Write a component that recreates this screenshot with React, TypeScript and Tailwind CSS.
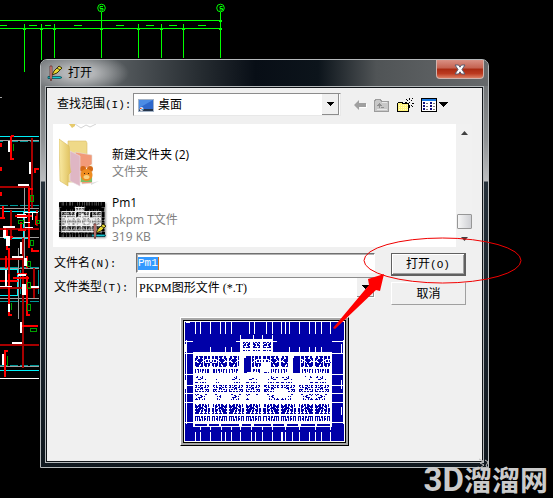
import { useState } from 'react';
import type { ReactNode } from 'react';

type Rect = [number, number, number, number];

// Canvas drawing behind the dialog: [x, y, width, height] grouped by layer color
const cadLayers: { color: string; rects: Rect[] }[] = [
  {
    color: '#00ff00',
    rects: [
      [0, 20, 221, 1], [0, 28, 221, 1],
      [24, 24, 1, 48], [41, 24, 1, 36], [54, 24, 1, 34], [101, 12, 1, 46],
      [138, 24, 1, 34], [161, 24, 1, 34], [183, 24, 1, 34], [220, 12, 1, 46],
      [0, 25, 7, 1], [29, 25, 8, 1], [45, 25, 6, 1], [74, 25, 8, 1], [116, 25, 8, 1],
      [146, 25, 8, 1], [169, 25, 8, 1], [198, 25, 8, 1],
      [23, 28, 3, 2], [40, 28, 3, 2], [53, 28, 3, 2], [100, 28, 3, 2], [137, 28, 3, 2],
      [160, 28, 3, 2], [182, 28, 3, 2], [219, 28, 3, 2], [219, 20, 3, 2],
    ],
  },
  {
    color: '#00f0f8',
    rects: [
      [0, 136, 39, 1], [0, 370, 39, 1], [4, 211, 35, 1], [4, 238, 24, 1],
      [0, 269, 19, 1], [17, 269, 1, 26], [0, 295, 18, 1], [23, 211, 1, 27],
    ],
  },
  {
    color: '#009898',
    rects: [
      [0, 141, 3, 1], [10, 141, 8, 1], [20, 141, 8, 1], [30, 141, 9, 1],
      [0, 205, 8, 1], [10, 205, 8, 1], [20, 205, 8, 1], [30, 205, 9, 1],
      [0, 267, 8, 1], [10, 267, 8, 1], [20, 267, 8, 1], [30, 267, 9, 1],
      [0, 301, 8, 1], [10, 301, 8, 1], [20, 301, 8, 1], [30, 301, 9, 1],
      [0, 365, 8, 1], [10, 365, 8, 1], [20, 365, 8, 1], [30, 365, 9, 1],
      [20, 270, 1, 24], [38, 270, 1, 24], [24, 240, 1, 26],
    ],
  },
  {
    color: '#a0a0a0',
    rects: [
      [0, 97, 2, 1], [0, 140, 39, 1], [0, 208, 39, 1], [0, 237, 39, 1], [0, 268, 39, 1],
      [0, 298, 39, 1], [0, 366, 39, 1], [24, 188, 1, 71], [18, 248, 1, 71],
    ],
  },
  {
    color: '#a80000',
    rects: [
      [31, 138, 2, 70], [0, 186, 30, 2], [0, 228, 39, 2], [0, 258, 28, 2], [10, 210, 2, 30],
      [36, 210, 2, 16], [22, 238, 2, 130], [0, 344, 39, 2], [0, 287, 39, 2], [8, 268, 2, 30],
      [33, 268, 2, 30],
    ],
  },
  {
    color: '#ff0000',
    rects: [
      [10, 136, 2, 24], [10, 158, 4, 2], [11, 135, 3, 2], [0, 143, 2, 4], [0, 167, 2, 4],
      [34, 170, 2, 3], [34, 168, 5, 2], [0, 192, 2, 4], [28, 188, 2, 38], [28, 188, 5, 2],
      [2, 206, 2, 13], [0, 217, 5, 2], [15, 215, 18, 2], [4, 228, 2, 10], [20, 222, 2, 8],
      [28, 224, 2, 24], [31, 250, 8, 2], [31, 248, 2, 4], [8, 248, 2, 22], [5, 256, 2, 12],
      [26, 256, 2, 12], [13, 277, 16, 2], [17, 273, 10, 2], [0, 280, 18, 2], [8, 274, 2, 42],
      [8, 314, 4, 2], [26, 276, 2, 40], [26, 314, 4, 2], [22, 325, 16, 2], [4, 350, 2, 27],
      [4, 350, 4, 2], [18, 229, 8, 2], [35, 216, 2, 9], [6, 230, 2, 20], [10, 236, 3, 2],
    ],
  },
  {
    color: '#ffffff',
    rects: [
      [8, 141, 2, 11], [29, 162, 2, 12], [18, 184, 11, 2], [17, 217, 10, 1], [17, 214, 9, 1],
      [32, 212, 1, 8], [24, 212, 14, 1], [3, 226, 12, 2], [3, 230, 3, 8], [6, 236, 4, 10],
      [20, 242, 2, 12], [12, 256, 11, 2], [24, 258, 3, 8], [5, 270, 2, 16], [0, 286, 12, 1],
      [22, 284, 4, 11], [30, 286, 9, 2], [8, 304, 2, 8], [20, 322, 2, 11], [12, 342, 10, 2],
      [2, 354, 2, 11], [18, 274, 8, 2], [25, 227, 8, 1], [0, 378, 39, 1], [24, 222, 6, 1],
    ],
  },
];

// Open boxes of the canvas drawing
const cadBoxes: Rect[] = [
  [30, 195, 3, 6], [18, 220, 5, 3], [36, 220, 3, 3], [30, 240, 3, 5],
  [27, 261, 3, 5], [27, 282, 3, 6], [27, 304, 3, 6], [30, 328, 6, 3],
];

function CadCanvas() {
  return (
    <svg className="absolute left-0 top-0" width="553" height="498" aria-hidden="true">
      <g shapeRendering="crispEdges">
        {cadLayers.map((layer) => (
          <g key={layer.color} fill={layer.color}>
            {layer.rects.map(([x, y, w, h], i) => (
              <rect key={i} x={x} y={y} width={w} height={h} />
            ))}
          </g>
        ))}
        <g fill="none" stroke="#00a000">
          {cadBoxes.map(([x, y, w, h], i) => (
            <rect key={i} x={x + 0.5} y={y + 0.5} width={w} height={h} />
          ))}
          <path d="M13.5 144v7M11.500 303v7M7.500 356v10" />
        </g>
      </g>
      <g fill="none" stroke="#00ff00">
        <circle cx="101.500" cy="8" r="3.800" />
        <circle cx="220.500" cy="8" r="3.800" />
        <path d="M103 6.500h-3v2h3v1.500h-3M222.500 6.500h-2.500v2h2.500v1.500h-3" />
      </g>
    </svg>
  );
}

// One room per tile, "#" is open floor and the rest is line work
const roomBands: { y: number; rows: string[] }[] = [
  {
    y: 34,
    rows: [
      '..##.####.###.##.',
      '..##..###.###.##.',
      '.###..##..###.##.',
      '.##.#####.#......',
      '.#.######...##.#.',
      '....####..#.##.#.',
      '.##..##.#.#.....#',
      '.########.######.',
      '.#####.##.###.##.',
      '.####..##.###.##.',
      '..###.###..##.#..',
    ],
  },
  { y: 47, rows: ['.#.##.#.##.#.##..', '.#..#.#.##.#.##..', '.#..#.#.#..#.##..', '.#..#...#..#.##..'] },
  { y: 54, rows: ['...#....#........', '..##..#.#........', '.......##........', '....###....#.....', '.................', '.###..#.##.#.....'] },
  { y: 62, rows: ['.##.#.###..#.##..', '..#...#....#..#..', '.##.##.##.##.#...', '......###........', '.#.##.#.#..####..', '.#..........#.#..', '.###.##.##.#.##..'] },
  { y: 71, rows: ['.#.##......##....', '..#...##.........', '.......##.#......', '....####.........', '..#..#....#......', '.###.#..#.#......'] },
  {
    y: 81,
    rows: [
      '.#...##.##.#..#..',
      '.##.###.##.##.#..',
      '.######.#.###.#..',
      '.###.####..##....',
      '..#.######..#.##.',
      '.######.#.###.##.',
      '.#####.##.###.##.',
      '..####.##..##.##.',
      '.####..#...#..#..',
      '.####.###.###.##.',
      '.................',
      '.................',
      '.#####.##.##.###.',
      '.#.#.#.##.#..#.#.',
      '.#.#.#..#.##.#.#.',
      '.#.#.##.#.##.#.#.',
      '.#.#.##.#.#..#.#.',
    ],
  },
];

// Rooms 1, 4 and 6 are mirrored
const mirrored = [false, true, false, false, true, false, true, false];

const topTicks = [10, 15, 25, 35, 40, 46, 64, 69, 80, 86, 95, 99, 103, 113, 123, 129, 135, 144];
const bottomTicks = [10, 15, 25, 36, 40, 46, 55, 66, 70, 77, 86, 95, 96, 99, 106, 113, 123, 129, 135, 144];
const innerTicks = [25, 40, 46, 103, 113, 123, 129, 135];
const sideTicks = [19, 31, 52, 62, 70, 79, 99];

function tilePath(rows: string[], x: number, y: number, mirror = false) {
  let d = '';
  rows.forEach((row, r) => {
    for (let c = 0; c < row.length; c++) {
      const cell = mirror ? row[row.length - 1 - c] : row[c];
      if (cell === '#') d += `M${x + c} ${y + r}h1v1h-1z`;
    }
  });
  return d;
}

function FloorPlan({ ground, line, crisp, className }: { ground: string; line: string; crisp: boolean; className: string }) {
  const rooms = roomBands
    .map((band) => mirrored.map((mirror, i) => tilePath(band.rows, 9 + i * 17, band.y, mirror)).join(''))
    .join('');
  const lobby = [57, 67, 77]
    .map((x, i) => tilePath(['.##.##.#.', '.#.#..##.', '..##.###.', '.###.##..', '.#....##.', '.##.####.', '.........', '.........', '.##.#.##.'], x, 20, i === 1))
    .join('');

  return (
    <svg
      className={className}
      viewBox="0 0 158 118"
      preserveAspectRatio="none"
      shapeRendering={crisp ? 'crispEdges' : 'auto'}
      role="img"
      aria-label="Pm1"
    >
      <rect width="158" height="118" fill={ground} />
      <g fill={line}>
        {topTicks.map((x) => <rect key={x} x={x} width="1" height="12" />)}
        {bottomTicks.map((x) => <rect key={x} x={x} y="109" width="1" height="9" />)}
        {innerTicks.map((x) => <rect key={x} x={x} y="25" width="1" height="6" />)}
        {[55, 68, 77, 86].map((x) => <rect key={x} x={x} y="13" width="1" height="6" />)}
        {sideTicks.map((y) => (
          <g key={y}>
            <rect y={y} width="8" height="1" />
            <rect x="146" y={y} width="12" height="1" />
          </g>
        ))}
        <path d="M1 0h4v1h-4zM1 18h1v83h-1zM0 22h1v8h-1zM0 58h1v8h-1zM157 18h1v83h-1zM155 22h1v10h-1zM155 58h1v8h-1zM155 84h1v8h-1z" />
        <path d="M51 19h40v1h-40zM55 17h32v14h-32zM8 30h138v74h-138z" />
        {[15, 25, 36, 46, 55, 66, 77, 86, 99, 113, 129, 144].map((x) => <rect key={x} x={x} y="104" width="1" height="3" />)}
      </g>
      <path d={rooms + lobby} fill={ground} />
      {/* stairwells and the white core around them */}
      <rect x="54" y="32" width="13" height="20" fill={line} />
      <rect x="102" y="32" width="13" height="20" fill={line} />
      <path d="M59 34h7v17h-7zM107 34h7v17h-7z" fill={ground} />
      <path d="M57 34h4v2h-3v6h-1zM104 34h4v2h-3v6h-1zM76 40h9v10h-9zM34 52h13v8h-13zM62 50h12v6h-12zM64 72h13v7h-13zM88 66h14v9h-14zM90 52h10v3h-10zM36 70h10v10h-10zM115 55h8v7h-8z" fill={line} />
      <path
        d="M10 101h12v2h-12zM24 101h10v2h-10zM36 101h18v2h-18zM57 101h9v2h-9zM69 101h16v2h-16zM87 101h11v2h-11zM101 101h11v2h-11zM115 101h14v2h-14zM131 101h13v2h-13z"
        fill={ground}
      />
    </svg>
  );
}

function AppIcon({ className }: { className: string }) {
  return (
    <svg className={className} viewBox="0 0 16 16" aria-hidden="true">
      <path d="M1 11.500h12l2 1-2 1H1z" fill="#10c8d0" stroke="#064c58" strokeWidth=".8" />
      <path d="M5 10 7 6l5-5 3 2-5 5z" fill="#e8d830" stroke="#3a3208" />
      <path d="m10 3 3 2" stroke="#403c30" />
      <path d="M3 1h2v12l-1 3-1-3z" fill="#e4948c" stroke="#5a2420" strokeWidth=".7" />
    </svg>
  );
}

function DesktopIcon() {
  return (
    <svg className="h-4 w-4 shrink-0" viewBox="0 0 16 16" aria-hidden="true">
      <rect x=".5" y="2.500" width="15" height="12" fill="#2e68cc" stroke="#a4b4c8" />
      <path d="M1 3h14L1 11z" fill="#4c8ce4" />
      <path d="M1 12h14v2H1z" fill="#26364c" />
      <circle cx="3.500" cy="12" r="2" fill="#e8e8f0" />
      <path d="M2 11h1.500v1H2z" fill="#e84820" />
      <path d="M3.500 12H5v1H3.500z" fill="#28a0e8" />
    </svg>
  );
}

function FolderIcon() {
  return (
    <svg className="h-[50px] w-[42px]" viewBox="0 0 42 50" aria-hidden="true">
      <defs>
        <linearGradient id="flap" x1="0" x2="1">
          <stop offset="0" stopColor="#f9eaa4" />
          <stop offset="1" stopColor="#dfc05c" />
        </linearGradient>
      </defs>
      <path d="m32 45 8-2-8 4z" fill="#ddd" />
      <path d="M9 3h18l1 2v39H9z" fill="#efd988" stroke="#d8bd68" strokeWidth=".6" />
      <path d="m16 14 17 3v28l-10 1z" fill="#f29a78" stroke="#e0e0e0" strokeWidth=".6" />
      <path d="m21 34 12-8v10z" fill="#f7f0d8" />
      <path d="M22 36h11v8H22z" fill="#7cc068" />
      <circle cx="24" cy="31" r="3" fill="#d46a18" />
      <circle cx="31" cy="31" r="3" fill="#d46a18" />
      <ellipse cx="27.500" cy="37" rx="6" ry="6" fill="#ee8c20" />
      <ellipse cx="27.500" cy="39" rx="3" ry="2" fill="#f8d080" />
      <path d="M25 35h1v1h-1zM29 35h1v1h-1z" fill="#402008" />
      <path d="m11 13 10 5v30l-10-5z" fill="#dfb6c4" stroke="#e8dce0" strokeWidth=".6" />
      <path d="m0 1 10 7c1 3 0 21 2 26l-3 3v11L1 43z" fill="url(#flap)" stroke="#d9bc60" strokeWidth=".6" />
    </svg>
  );
}

function ToolbarButton({ label, children }: { label: string; children: ReactNode }) {
  return (
    <button type="button" aria-label={label} className="flex h-4 shrink-0 items-center">
      {children}
    </button>
  );
}

// Half-width latin part of a label
function Half({ children }: { children: ReactNode }) {
  return <span className="font-['Liberation_Mono',monospace] text-[11px]">{children}</span>;
}

function DropArrow() {
  return (
    <span className="pointer-events-none flex h-full w-[17px] shrink-0 items-center justify-center border-b border-r border-[#8c8c8c] bg-[#f0f0f0]">
      <svg className="h-1 w-[7px]" viewBox="0 0 7 4" shapeRendering="crispEdges" aria-hidden="true">
        <path d="M0 0h7L3.500 4z" fill="#000" />
      </svg>
    </span>
  );
}

function Toolbar() {
  return (
    <div className="flex items-center pl-[10px]">
      <label htmlFor="look-in" className="w-[76px] shrink-0">
        查找范围<Half>(I):</Half>
      </label>
      <div className="flex h-[23px] flex-1 items-center border border-[#e8e8e8] border-l-[#8c8c8c] border-t-[#8c8c8c] bg-white pl-1 pr-px">
        <DesktopIcon />
        <select id="look-in" className="h-full min-w-0 flex-1 appearance-none bg-transparent pl-1 outline-none">
          <option>桌面</option>
        </select>
        <DropArrow />
      </div>
      <div className="flex w-[141px] shrink-0 items-center gap-[7px] pl-[13px]">
        <ToolbarButton label="后退">
          <svg className="h-3 w-[13px]" viewBox="0 0 13 12" aria-hidden="true">
            <path d="m0 6 5-5v3h7v4H5v3z" fill="#a0a0a0" />
            <path d="M5.500 8.500H12.500V5" fill="none" stroke="#fff" />
          </svg>
        </ToolbarButton>
        <ToolbarButton label="向上一级">
          <svg className="h-[14px] w-4" viewBox="0 0 16 14" shapeRendering="crispEdges" aria-hidden="true">
            <path d="M.5 13.500v-11h1v-1h5l1 2h7v10z" fill="#c8c8c8" stroke="#9c9c9c" />
            <path d="M8 4h5v1H8zM3 11h10v1H3z" fill="#e8e8e8" />
            <path d="M5 5h1v1h1v1h1v1H6v2H5V8H3V7h1V6h1zM7 9h3v1H7z" fill="#909090" />
          </svg>
        </ToolbarButton>
        <ToolbarButton label="新建文件夹">
          <svg className="h-4 w-[17px]" viewBox="0 0 17 16" shapeRendering="crispEdges" aria-hidden="true">
            <path d="M.5 14.500V6.500l1-1h3l2 1H11.500V14.500z" fill="#fff47c" stroke="#000" />
            <path d="M2 8.500h9M2 10.500h9M2 12.500h9" stroke="#fffbd0" strokeDasharray="1 1" />
            <path d="M12 1h1v2h-1zM12 8h1v3h-1zM8 5h2v1H8zM15 6h2v1h-2zM9 2h1v1H9zM10 3h1v1h-1zM15 1h1v1h-1zM14 3h1v1h-1zM14 8h1v1h-1zM15 9h1v1h-1zM12 5h1v1h-1z" fill="#000" />
          </svg>
        </ToolbarButton>
        <ToolbarButton label="查看">
          <svg className="h-4 w-[27px]" viewBox="0 0 27 16" shapeRendering="crispEdges" aria-hidden="true">
            <path d="M.5 1.500h15v13H.5z" fill="#fff" stroke="#000" />
            <path d="M1 2h14v2H1z" fill="#1878e0" />
            <path d="M2 5h2v2H2zM2 8h2v2H2zM2 11h2v2H2zM9 5h2v2H9zM9 8h2v2H9zM9 11h2v2H9z" fill="#10107c" />
            <path d="M5 6.500h2M12 6.500h2M5 9.500h2M12 9.500h2M5 12.500h2M12 12.500h2" stroke="#777" />
            <path d="M18 5h9l-4.500 5z" fill="#000" />
          </svg>
        </ToolbarButton>
      </div>
    </div>
  );
}

function FileItem({ icon, name, details }: { icon: ReactNode; name: string; details: string[] }) {
  return (
    <li className="flex h-[57px] items-center">
      <div className="flex w-[59px] shrink-0 pl-[6px]">{icon}</div>
      <div className="leading-[17px]">
        <p>{name}</p>
        {details.map((detail) => (
          <p key={detail} className="text-[#808080]">{detail}</p>
        ))}
      </div>
    </li>
  );
}

function FileList() {
  return (
    <div className="ml-[6px] mr-[10px] mt-2 flex h-[123px] bg-white">
      <ul className="min-w-0 flex-1 overflow-hidden font-['Open_Sans','Noto_Sans_CJK_SC',sans-serif]">
        <li className="h-[10px] pl-[14px]">
          <svg className="h-[5px] w-8" viewBox="0 0 32 5" aria-hidden="true">
            <path d="m2 0 3 4 3-2V0z" fill="#e6ca6c" />
            <path d="m8 0 6 4 5-3 4 2 6-3" fill="none" stroke="#d4d4d4" />
          </svg>
        </li>
        <FileItem icon={<FolderIcon />} name="新建文件夹 (2)" details={['文件夹']} />
        <FileItem
          icon={
            <span className="relative block h-[35px] w-[46px] shadow-[1px_1px_2px_#999]">
              <FloorPlan ground="#000000" line="#f0f0f0" crisp={false} className="block h-full w-full" />
              <AppIcon className="absolute -bottom-[2px] -right-[2px] h-4 w-4" />
            </span>
          }
          name="Pm1"
          details={['pkpm T文件', '319 KB']}
        />
      </ul>
      <div className="flex w-4 shrink-0 flex-col items-center bg-[#f1f1f1]">
        <svg className="mt-[7px] h-1 w-[7px]" viewBox="0 0 7 4" aria-hidden="true">
          <path d="M0 4h7L3.500 0z" fill="#404040" />
        </svg>
        <div className="mt-auto h-[15px] w-[15px] rounded-[1px] border border-[#979797] bg-gradient-to-r from-[#f6f6f6] to-[#cfd0d4]" />
        <svg className="mb-[6px] mt-2 h-1 w-[7px]" viewBox="0 0 7 4" aria-hidden="true">
          <path d="M0 0h7L3.500 4z" fill="#404040" />
        </svg>
      </div>
    </div>
  );
}

function FileForm() {
  const [fileName, setFileName] = useState('Pm1');

  return (
    <form className="mt-[6px] flex pl-[7px] pr-4" onSubmit={(e) => e.preventDefault()}>
      <div className="flex min-w-0 flex-1 flex-col gap-1">
        <div className="flex h-5 items-center">
          <label htmlFor="file-name" className="w-[82px] shrink-0">
            文件名<Half>(N):</Half>
          </label>
          <div className="flex h-5 min-w-0 flex-1 items-center border border-white border-l-[#707070] border-t-[#707070] bg-white pl-px shadow-[inset_1px_1px_0_#b0b0b0]">
            <input
              id="file-name"
              value={fileName}
              onChange={(e) => setFileName(e.target.value)}
              className="h-[13px] w-[21px] border-r border-[#d07020] bg-[#3399ff] font-['Liberation_Mono',monospace] text-[11px] text-white outline-none"
            />
          </div>
        </div>
        <div className="flex h-[21px] items-center">
          <label htmlFor="file-type" className="w-[82px] shrink-0">
            文件类型<Half>(T):</Half>
          </label>
          <div className="flex h-[21px] min-w-0 flex-1 items-center border border-white border-l-[#8c8c8c] border-t-[#8c8c8c] bg-white">
            <select
              id="file-type"
              className="h-full min-w-0 flex-1 appearance-none bg-transparent pl-[2px] font-['Liberation_Serif','Noto_Sans_CJK_SC',serif] outline-none"
            >
              <option>PKPM图形文件 (*.T)</option>
            </select>
            <DropArrow />
          </div>
        </div>
      </div>
      <div className="ml-4 flex w-[75px] shrink-0 flex-col gap-[6px]">
        <button
          type="submit"
          className="h-[23px] border border-b-2 border-r-2 border-[#606060] bg-[#f0f0f0] leading-5 shadow-[inset_1px_1px_0_#fff,inset_-1px_-1px_0_#a0a0a0]"
        >
          打开<Half>(O)</Half>
        </button>
        <button type="button" className="h-[23px] border border-white border-b-[#a0a0a0] border-r-[#a0a0a0] bg-[#f0f0f0] leading-5">
          取消
        </button>
      </div>
    </form>
  );
}

function OpenDialog() {
  return (
    <section
      role="dialog"
      aria-labelledby="dialog-title"
      className="relative rounded-t-[7px] border border-[#b4b8ba] bg-[linear-gradient(to_bottom,#66696b_0px,#8f9294_80px,#bcbec0_121px,#26313a_122px,#10181f_100%)] px-1 pb-1"
    >
      <header className="-mx-1 flex h-[26px] items-start rounded-t-[6px] bg-[radial-gradient(ellipse_50px_20px_at_38px_13px,#b4b6b8_30%,transparent),linear-gradient(to_right,#74787b_0%,#5c6164_15%,#252b30_36%,#080e16_48%,#0c141b_62%,#505456_75%,#66696b_100%)] pl-[6px] pr-1">
        <AppIcon className="mt-[5px] h-4 w-4" />
        <h1 id="dialog-title" className="ml-[5px] mt-[3px] text-[12px] leading-5">
          打开
        </h1>
        <button
          type="button"
          aria-label="关闭"
          className="ml-auto flex h-[19px] w-12 items-center justify-center rounded-b-[4px] border border-t-0 border-[#d0b4ae] bg-[linear-gradient(to_bottom,#d99084_0%,#c4614f_45%,#a92a12_50%,#bb3a20_75%,#dc7e62_100%)]"
        >
          <svg className="h-[11px] w-3" viewBox="0 0 12 11" aria-hidden="true">
            <path d="M1 1h3.500L6 3.200 7.500 1H11L8 5.500 11 10H7.500L6 7.800 4.500 10H1l3-4.500z" fill="#fff" stroke="#5a5c70" />
          </svg>
        </button>
      </header>
      <div className="border border-[#b4b8ba]">
        <div className="border border-[#101418] bg-[#f0f0f0] pb-[15px] pt-[5px] text-[12px] leading-4 text-black">
          <Toolbar />
          <FileList />
          <FileForm />
          <div className="mx-auto mt-3 w-[169px] border border-b-black border-l-white border-r-black border-t-white bg-[#a8a8a8] p-[2px]">
            <div className="border border-black bg-white p-px">
              <FloorPlan ground="#0000a8" line="#ffffff" crisp className="block h-[119px] w-full" />
            </div>
          </div>
        </div>
      </div>
    </section>
  );
}

function Annotation() {
  return (
    <svg className="pointer-events-none absolute left-0 top-0" width="553" height="498" aria-hidden="true">
      <ellipse cx="442.500" cy="260.500" rx="78.500" ry="22.500" fill="none" stroke="#f00000" />
      <path d="m333 328 36-43-1-6 16-5-4 17-4-1-41 39z" fill="#ff0000" />
      <path d="m479 459 4 2-3 2 4 2-4 3M485 460l3 2-2 4 3 2" fill="none" stroke="#c0c0c0" />
    </svg>
  );
}

export default function App() {
  return (
    <main className="relative min-h-screen overflow-hidden bg-black pb-[30px] pl-10 pr-16 pt-[59px] font-['Liberation_Sans','Noto_Sans_CJK_SC',sans-serif]">
      <CadCanvas />
      <OpenDialog />
      <Annotation />
      <p className="absolute bottom-0 right-[5px] flex items-baseline font-bold leading-8 text-[#cacaca]">
        <span className="font-['Roboto',sans-serif] text-[33px]">3D</span>
        <span className="text-[28px]">溜溜网</span>
      </p>
    </main>
  );
}
